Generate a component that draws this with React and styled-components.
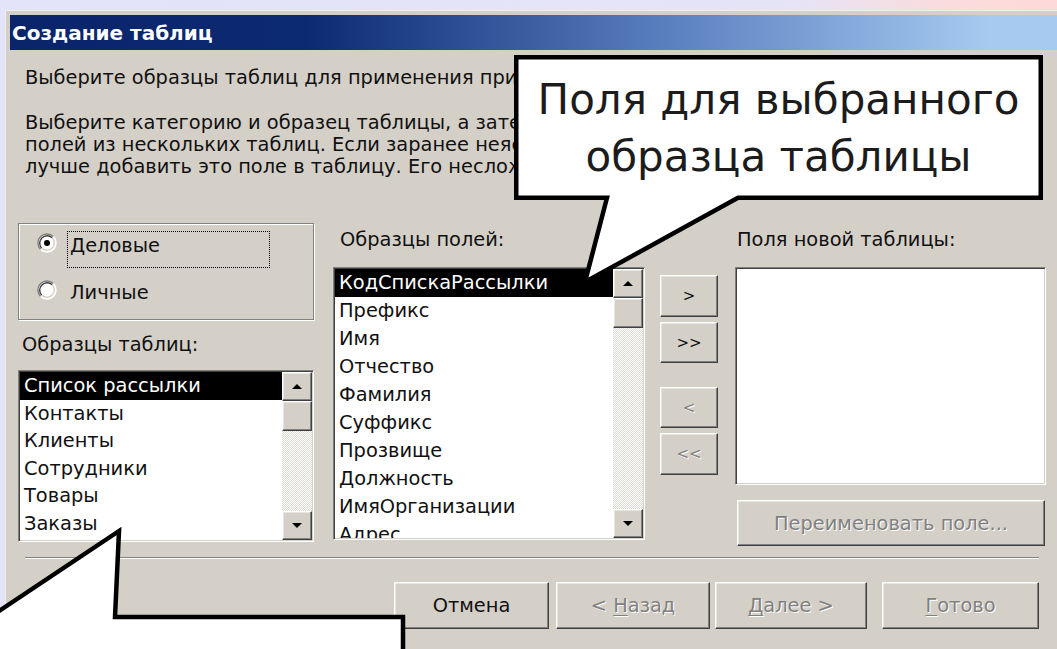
import React from 'react';
import styled, { createGlobalStyle, css } from 'styled-components';

const FACE = '#d4d0c8';
const SHADOW = '#808080';
const DARK = '#404040';
const TEXT_SIZE = 19.4;

const GlobalStyle = createGlobalStyle`
  html, body { margin: 0; padding: 0; }
  body {
    background: #e4e4fa;
    font-family: "DejaVu Sans", Verdana, sans-serif;
    overflow: hidden;
  }
`;

const raised = css`
  box-sizing: border-box;
  background: ${FACE};
  border: 1px solid;
  border-color: #fff ${DARK} ${DARK} #fff;
  box-shadow: inset -1px -1px 0 ${SHADOW}, inset 1px 1px 0 #e8e6e1;
`;

const sunken = css`
  box-sizing: border-box;
  border: 1px solid;
  border-color: ${SHADOW} #fff #fff ${SHADOW};
  box-shadow: inset 1px 1px 0 ${DARK}, inset -1px -1px 0 ${FACE};
`;

const Page = styled.div`
  position: relative;
  width: 1057px;
  height: 649px;
  overflow: hidden;
  box-sizing: border-box;
  padding: 10px 0 0 5px;
  background: linear-gradient(90deg, #e3e3f9 0%, #e5e4f7 74%, #fbdcdc 90%, #fdd9d9 100%);
`;

const Dialog = styled.div`
  width: 1070px;
  height: 660px;
  box-sizing: border-box;
  background: ${FACE};
  border-top: 1px solid #eef0ea;
  border-left: 1px solid #eeeeea;
  padding: 4px 0 0 4px;
  color: #111;
`;

const TitleBar = styled.div`
  height: 35px;
  display: flex;
  align-items: center;
  padding-left: 2px;
  background: linear-gradient(90deg, #0a246a 0%, #0c2a72 28%, #5b80c0 62%, #a6caf0 92%);
  color: #fff;
  font-weight: bold;
  font-size: 20px;
  white-space: nowrap;
`;

const Body = styled.div`
  display: flex;
  flex-direction: column;
  padding-left: 8px;
`;

const Intro = styled.div`
  padding-left: 7px;
  margin-top: ${p => p.$top}px;
  font-size: ${TEXT_SIZE}px;
  line-height: 22px;
`;

const Line = styled.span`
  display: block;
  white-space: nowrap;
`;

const Main = styled.div`
  display: flex;
  align-items: flex-start;
  margin-top: 45px;
  height: 319px;
`;

const Column = styled.div`
  display: flex;
  flex-direction: column;
  width: ${p => p.$w}px;
  margin-left: ${p => p.$gap || 0}px;
`;

const Label = styled.div`
  height: 22px;
  line-height: 22px;
  font-size: ${TEXT_SIZE}px;
  white-space: nowrap;
  padding-left: ${p => p.$indent}px;
  margin-top: ${p => p.$top}px;
`;

const GroupBox = styled.div`
  box-sizing: border-box;
  height: 97px;
  border: 1px solid ${SHADOW};
  box-shadow: inset 1px 1px 0 #fff, 1px 1px 0 #fff;
  padding: 7px 0 0 18px;
  display: flex;
  flex-direction: column;
`;

const RadioRow = styled.div`
  display: flex;
  align-items: flex-start;
  height: ${p => p.$h}px;
`;

const RadioDot = styled.svg`
  flex: none;
  margin-top: 2px;
  margin-right: 10px;
`;

const RadioText = styled.div`
  box-sizing: border-box;
  width: 203px;
  height: 37px;
  padding: 3px 0 0 2px;
  border: 1px dotted ${p => (p.$focused ? '#000' : 'transparent')};
  font-size: ${TEXT_SIZE}px;
  line-height: 22px;
`;

const ListBox = styled.div`
  ${sunken}
  display: flex;
  height: ${p => p.$h}px;
  margin-top: ${p => p.$top}px;
  padding: 1px;
  background: #fff;
  overflow: hidden;
`;

const Items = styled.div`
  flex: 1;
  min-width: 0;
  overflow: hidden;
`;

const Item = styled.div`
  height: ${p => p.$rowH}px;
  line-height: ${p => p.$rowH}px;
  padding-left: 4px;
  font-size: ${TEXT_SIZE}px;
  white-space: nowrap;
  ${p => p.$selected && css`
    background: #000;
    color: #fff;
  `}
`;

const ScrollBar = styled.div`
  width: 30px;
  flex: none;
  display: flex;
  flex-direction: column;
`;

const ScrollButton = styled.div`
  ${raised}
  height: ${p => p.$h}px;
  display: flex;
  align-items: center;
  justify-content: center;
`;

const Track = styled.div`
  flex: 1;
  background: repeating-conic-gradient(#fff 0 25%, #dcd9d2 0 50%) 0 0 / 2px 2px;
`;

const PushButton = styled.button`
  ${raised}
  width: ${p => p.$w}px;
  height: ${p => p.$h}px;
  margin: ${p => p.$top || 0}px 0 0 ${p => p.$left || 0}px;
  padding: 0;
  display: flex;
  align-items: center;
  justify-content: center;
  font-family: "DejaVu Sans", Verdana, sans-serif;
  font-size: ${p => p.$size || TEXT_SIZE}px;
  color: #111;
  white-space: pre;
  &:disabled {
    color: ${SHADOW};
    text-shadow: 1px 1px 0 #fff;
  }
  u { text-decoration-thickness: 1px; text-underline-offset: 3px; }
`;

const Separator = styled.div`
  margin: 15px 0 0 7px;
  width: 1014px;
  height: 1px;
  background: ${SHADOW};
  border-bottom: 1px solid #fff;
`;

const Footer = styled.div`
  display: flex;
  justify-content: flex-end;
  margin: 23px 0 0 7px;
  width: 1014px;
`;

const Callout = styled.div`
  position: absolute;
  left: ${p => p.$x}px;
  top: ${p => p.$y}px;
  width: ${p => p.$w}px;
  height: ${p => p.$h}px;
`;

const CalloutShape = styled.svg`
  position: absolute;
  left: 0;
  top: 0;
  overflow: visible;
`;

const CalloutText = styled.div`
  position: relative;
  height: ${p => p.$boxH}px;
  display: flex;
  flex-direction: column;
  align-items: center;
  justify-content: center;
  font-size: 42px;
  line-height: 57px;
  color: #1c1c1c;
  white-space: nowrap;
`;

const Radio = ({ checked }) => (
  <RadioDot width="20" height="20" viewBox="0 0 20 20">
    <circle cx="10" cy="10" r="9" fill="#fff" />
    <path d="M3.6 16.4 A9 9 0 0 1 16.4 3.6" stroke={SHADOW} strokeWidth="1.4" fill="none" />
    <path d="M4.7 15.3 A7.5 7.5 0 0 1 15.3 4.7" stroke={DARK} strokeWidth="1.4" fill="none" />
    <path d="M16.4 3.6 A9 9 0 0 1 3.6 16.4" stroke="#fff" strokeWidth="1.4" fill="none" />
    <path d="M15.3 4.7 A7.5 7.5 0 0 1 4.7 15.3" stroke={FACE} strokeWidth="1.4" fill="none" />
    {checked && <circle cx="10" cy="10" r="3" fill="#000" />}
  </RadioDot>
);

const Arrow = ({ up }) => (
  <svg width="10" height="5" viewBox="0 0 10 5">
    <polygon points={up ? '5,0 10,5 0,5' : '0,0 10,0 5,5'} fill="#000" />
  </svg>
);

const List = ({ items, h, top, rowH }) => (
  <ListBox $h={h} $top={top}>
    <Items>
      {items.map((name, i) => (
        <Item key={name} $rowH={rowH} $selected={i === 0}>{name}</Item>
      ))}
    </Items>
    <ScrollBar>
      <ScrollButton $h={29}><Arrow up /></ScrollButton>
      <ScrollButton $h={30} />
      <Track />
      <ScrollButton $h={29}><Arrow /></ScrollButton>
    </ScrollBar>
  </ListBox>
);

const sampleTables = ['Список рассылки', 'Контакты', 'Клиенты', 'Сотрудники', 'Товары', 'Заказы', 'Поставщики'];
const sampleFields = [
  'КодСпискаРассылки', 'Префикс', 'Имя', 'Отчество', 'Фамилия', 'Суффикс',
  'Прозвище', 'Должность', 'ИмяОрганизации', 'Адрес', 'Город',
];

export default function App() {
  return (
    <>
      <GlobalStyle />
      <Page>
        <Dialog>
          <TitleBar>Создание таблиц</TitleBar>
          <Body>
            <Intro $top={17}>
              <Line>Выберите образцы таблиц для применения при создании собственной таблицы.</Line>
            </Intro>
            <Intro $top={23}>
              <Line>Выберите категорию и образец таблицы, а затем нужные образцы</Line>
              <Line>полей из нескольких таблиц. Если заранее неясно, нужно ли поле,</Line>
              <Line>лучше добавить это поле в таблицу. Его несложно удалить.</Line>
            </Intro>

            <Main>
              <Column $w={296}>
                <GroupBox>
                  <RadioRow $h={47}>
                    <Radio checked />
                    <RadioText $focused>Деловые</RadioText>
                  </RadioRow>
                  <RadioRow $h={37}>
                    <Radio />
                    <RadioText>Личные</RadioText>
                  </RadioRow>
                </GroupBox>
                <Label $indent={4} $top={14}>Образцы таблиц:</Label>
                <List items={sampleTables} h={172} top={14} rowH={27.6} />
              </Column>

              <Column $w={312} $gap={19}>
                <Label $indent={7} $top={6}>Образцы полей:</Label>
                <List items={sampleFields} h={273} top={16} rowH={28} />
              </Column>

              <Column $w={58} $gap={15}>
                <PushButton $w={58} $h={42} $top={52} $size={15}>&gt;</PushButton>
                <PushButton $w={58} $h={41} $top={5} $size={15}>&gt;&gt;</PushButton>
                <PushButton $w={58} $h={41} $top={24} $size={15} disabled>&lt;</PushButton>
                <PushButton $w={58} $h={42} $top={5} $size={15} disabled>&lt;&lt;</PushButton>
              </Column>

              <Column $w={311} $gap={17}>
                <Label $indent={2} $top={6}>Поля новой таблицы:</Label>
                <ListBox $h={218} $top={16} />
                <PushButton $w={308} $h={46} $top={15} $left={2} disabled>
                  <span>Переименовать поле...</span>
                </PushButton>
              </Column>
            </Main>

            <Separator />

            <Footer>
              <PushButton $w={155} $h={47}><span>Отмена</span></PushButton>
              <PushButton $w={154} $h={47} $left={7} disabled>
                <span>{'< '}<u>Н</u>азад</span>
              </PushButton>
              <PushButton $w={152} $h={47} $left={5} disabled>
                <span><u>Д</u>{'алее >'}</span>
              </PushButton>
              <PushButton $w={157} $h={47} $left={15} disabled>
                <span><u>Г</u>отово</span>
              </PushButton>
            </Footer>
          </Body>
        </Dialog>

        <Callout $x={514} $y={55} $w={529} $h={230}>
          <CalloutShape width="529" height="230" viewBox="0 0 529 230">
            <path
              d="M2.25 2.25 H526.75 V142.75 H224 L71 227 L93 142.75 H2.25 Z"
              fill="#fff"
              stroke="#000"
              strokeWidth="4.5"
            />
          </CalloutShape>
          <CalloutText $boxH={145}>
            <span>Поля для выбранного</span>
            <span>образца таблицы</span>
          </CalloutText>
        </Callout>

        <Callout $x={0} $y={520} $w={420} $h={129}>
          <CalloutShape width="420" height="129" viewBox="0 0 420 129">
            <path
              d="M-10 97 L119 11 L115 97 H403 V170 H-10 Z"
              fill="#fff"
              stroke="#000"
              strokeWidth="4.5"
            />
          </CalloutShape>
        </Callout>
      </Page>
    </>
  );
}
